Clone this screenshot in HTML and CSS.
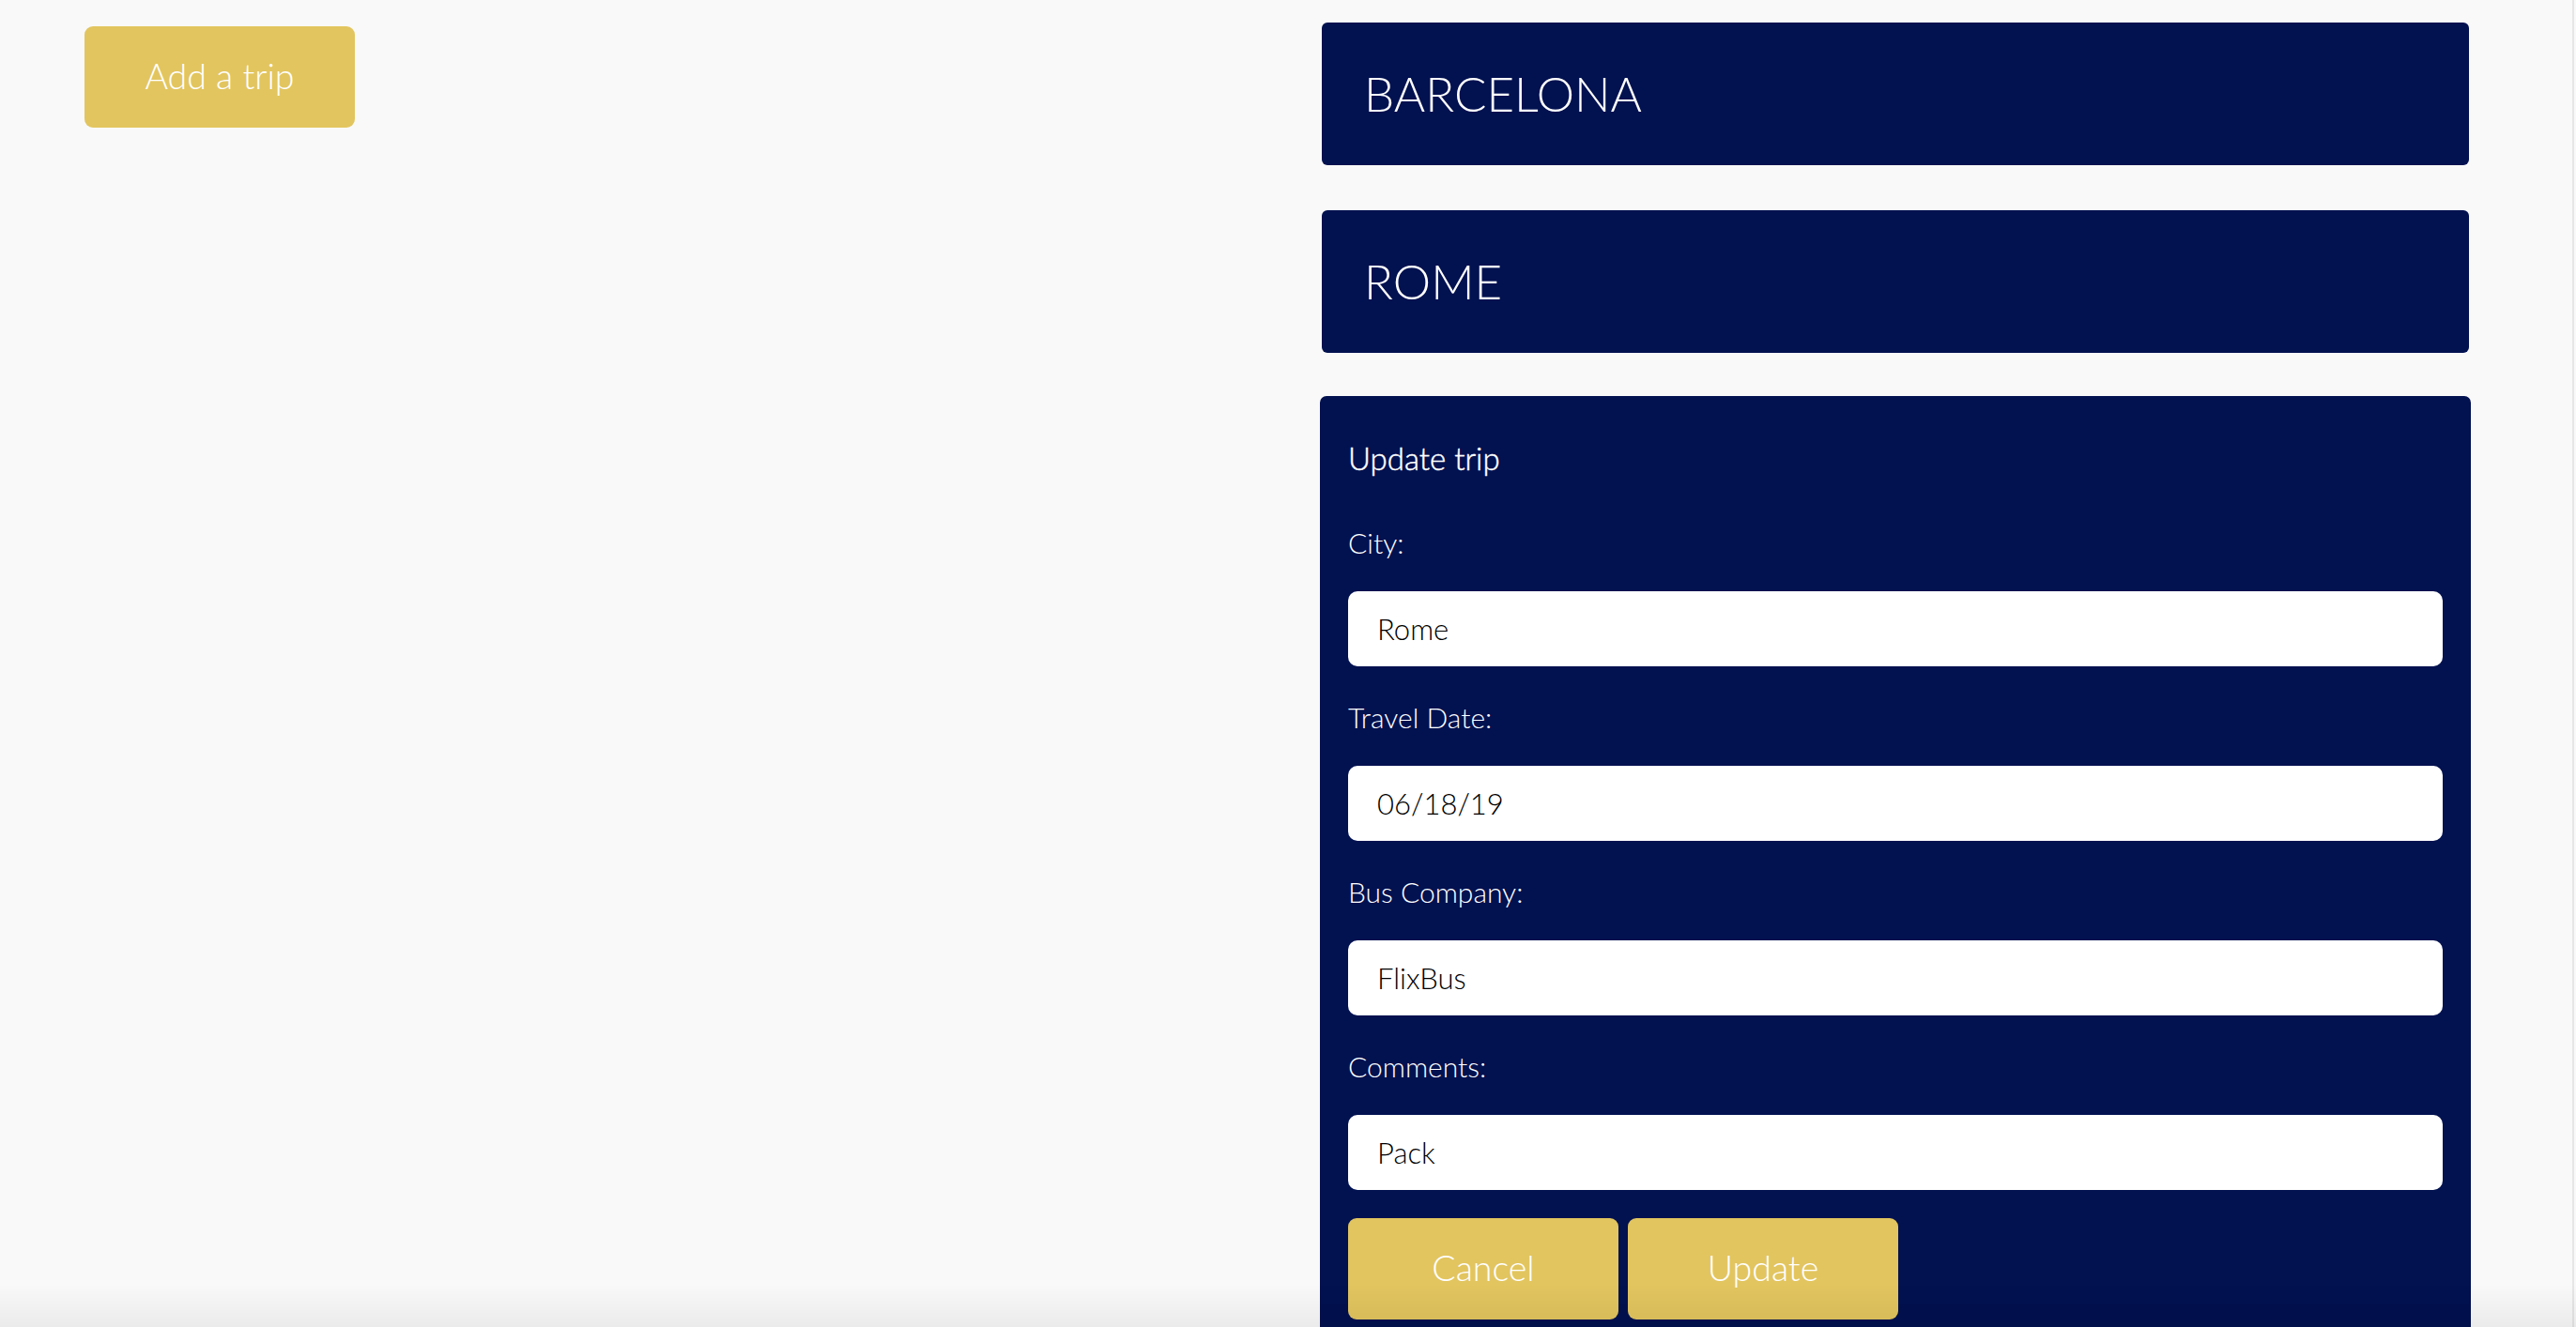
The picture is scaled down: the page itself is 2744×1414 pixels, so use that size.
FILE: index.html
```html
<!DOCTYPE html>
<html lang="en">
<head>
<meta charset="utf-8">
<title>Trips</title>
<link rel="stylesheet" href="styles.css">
</head>
<body>
<div class="page">
  <div class="side">
    <button class="btn" type="button">Add a trip</button>
  </div>
  <main class="trips">
    <div class="trip-card">BARCELONA</div>
    <div class="trip-card">ROME</div>
    <form class="trip-form">
      <div class="form-title">Update trip</div>
      <label class="field-label" for="city">City:</label>
      <input class="field-input" id="city" type="text" value="Rome">
      <label class="field-label" for="date">Travel Date:</label>
      <input class="field-input" id="date" type="text" value="06/18/19">
      <label class="field-label" for="bus">Bus Company:</label>
      <input class="field-input" id="bus" type="text" value="FlixBus">
      <label class="field-label" for="comments">Comments:</label>
      <input class="field-input" id="comments" type="text" value="Pack">
      <div class="form-actions">
        <button class="btn" type="button">Cancel</button>
        <button class="btn" type="button">Update</button>
      </div>
    </form>
  </main>
</div>
<div class="window-shade"></div>
</body>
</html>
```
FILE: styles.css
```css
html {
  min-height: 100%;
  background: #f9f9f9;
  box-shadow: inset -2px 0 0 #f9f9f9, inset -4px 0 0 #e6e6e6;
}
body {
  margin: 0;
  font-family: "Lato", "Liberation Sans", sans-serif;
  font-weight: 300;
  color: #fff;
}
.page {
  display: flex;
  align-items: flex-start;
}
.side {
  flex: 0 0 1406px;
  box-sizing: border-box;
  padding: 28px 0 0 90px;
}
.btn {
  width: 288px;
  height: 108px;
  border: 0;
  border-radius: 9px;
  background: #e2c55f;
  color: #fff;
  font-family: "Lato", "Liberation Sans", sans-serif;
  font-weight: 300;
  font-size: 37.5px;
  padding: 0 0 3px;
  cursor: pointer;
}
.trips {
  flex: 0 0 1226px;
  display: flex;
  flex-direction: column;
  gap: 48px;
  padding-top: 24px;
}
.trip-card {
  margin: 0 2px;
  height: 152px;
  box-sizing: border-box;
  padding: 0 0 1px 45px;
  display: flex;
  align-items: center;
  background: #021150;
  border-radius: 6px;
  font-size: 51px;
  line-height: 60px;
}
.trip-form {
  margin: -2px 0 0;
  background: #021150;
  border-radius: 7px;
  padding: 46px 30px 30px;
  display: flex;
  flex-direction: column;
}
.form-title {
  font-size: 33px;
  font-weight: 300;
  -webkit-text-stroke: 0.45px #fff;
  line-height: 40px;
  margin-bottom: 50px;
}
.field-label {
  font-size: 30px;
  line-height: 40px;
  margin-bottom: 32px;
}
.field-input {
  height: 80px;
  box-sizing: border-box;
  border: 0;
  border-radius: 10px;
  background: #fff;
  padding: 0 0 0 31px;
  margin: 0 0 34px;
  font-family: "Lato", "Liberation Sans", sans-serif;
  font-weight: 300;
  font-size: 31px;
  color: #000;
  outline: none;
}
.field-input:last-of-type {
  margin-bottom: 30px;
}
.form-actions {
  display: flex;
  gap: 10px;
}
.window-shade {
  position: fixed;
  left: 0;
  right: 0;
  bottom: 0;
  height: 46px;
  pointer-events: none;
  background: linear-gradient(to bottom, rgba(0, 0, 0, 0), rgba(0, 0, 0, 0.055));
}
```
